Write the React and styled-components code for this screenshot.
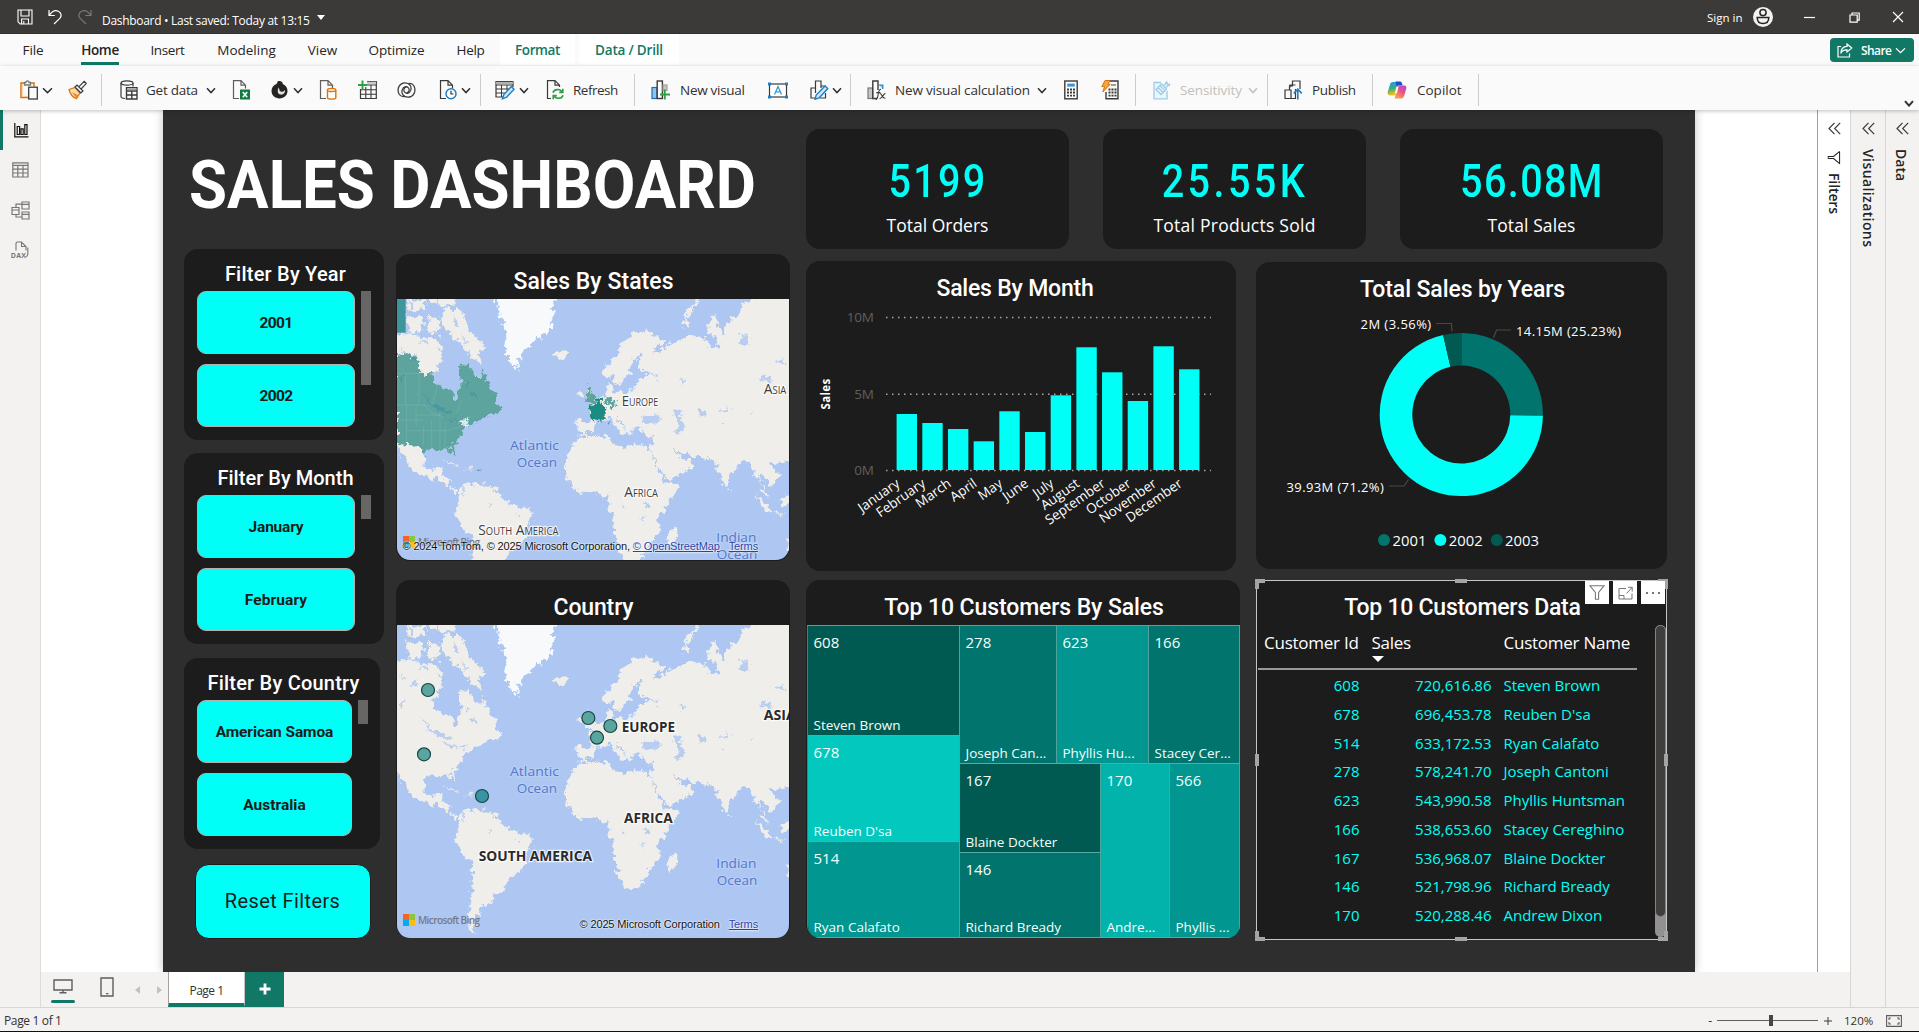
import React from "react";
import styled, { createGlobalStyle, css } from "styled-components";

const UI = '"Open Sans", "Noto Sans", sans-serif';
const DIN = 'Roboto, "Open Sans", sans-serif';
const ARIAL = '"Liberation Sans", Arial, sans-serif';

const C = {
  green: "#117865",
  aqua: "#00fff6",
  page: "#2e2e2e",
  card: "#1c1c1c",
  grey: "#f3f2f1",
  line: "#d8d6d4",
  ink: "#323130",
};

const Global = createGlobalStyle`
  *, *::before, *::after { box-sizing: border-box; }
  body { margin: 0; background: #f3f2f1; font-family: ${UI}; overflow: hidden; }
  svg { display: block; }
`;

const Shell = styled.div`
  width: 1919px;
  height: 1032px;
  display: flex;
  flex-direction: column;
  background: ${C.grey};
  color: ${C.ink};
`;

const Slot = styled.div`
  flex: none;
  display: flex;
  align-items: center;
  margin-left: ${(p) => p.$ml || 0}px;
  width: ${(p) => (p.$w ? `${p.$w}px` : "auto")};
`;

const Label = styled.span`
  flex: none;
  white-space: nowrap;
  margin-left: ${(p) => p.$ml || 0}px;
  width: ${(p) => (p.$w ? `${p.$w}px` : "auto")};
  font-size: ${(p) => p.$size || 13.5}px;
  font-weight: ${(p) => p.$weight || 400};
  letter-spacing: ${(p) => p.$ls || 0}px;
  color: ${(p) => p.$color || C.ink};
`;

/* ---------- title bar ---------- */
const TitleBar = styled.header`
  flex: none;
  height: 34px;
  display: flex;
  align-items: center;
  background: #3b3a38;
  border-bottom: 1px solid #323130;
  padding: 1px 15px 0 17px;
`;
const DocName = styled(Label)`
  padding-top: 6px;
`;
const Caret = styled.i`
  width: 0;
  height: 0;
  margin-left: 7px;
  margin-top: 1px;
  border: 4px solid transparent;
  border-top: 5px solid #fff;
  border-bottom: 0;
`;
const Grow = styled.div`
  flex: 1;
`;

/* ---------- tabs ---------- */
const TabRow = styled.nav`
  flex: none;
  height: 32px;
  display: flex;
  background: #fafafa;
  padding-left: 22px;
`;
const Tab = styled.div`
  flex: none;
  display: flex;
  align-items: center;
  justify-content: center;
  height: 31px;
  padding-top: 1px;
  width: ${(p) => p.$w}px;
  margin-left: ${(p) => p.$ml || 0}px;
  font-size: 13.5px;
  white-space: nowrap;
  letter-spacing: ${(p) => p.$ls || 0}px;
  color: ${(p) => (p.$ctx ? C.green : "#252423")};
  font-weight: ${(p) => (p.$on || p.$ctx ? 600 : 400)};
  background: ${(p) => (p.$ctx ? "#fff" : "transparent")};
  ${(p) => p.$on && css`box-shadow: inset 0 -3px 0 ${C.green};`}
`;
const Share = styled.button`
  width: 84px;
  height: 24px;
  margin: 4px 5px 0 auto;
  padding: 0 0 0 7px;
  display: flex;
  align-items: center;
  border: 0;
  border-radius: 4px;
  background: ${C.green};
  color: #fff;
  font: 600 12px ${UI};
`;
const ShareText = styled.span`
  width: 34px;
  margin-left: 8px;
  text-align: left;
  letter-spacing: -0.6px;
`;

/* ---------- ribbon ---------- */
const Ribbon = styled.div`
  flex: none;
  position: relative;
  z-index: 2;
  height: 44px;
  display: flex;
  align-items: flex-start;
  padding: 8px 5px 0 20px;
  background: #fafafa;
  box-shadow: 0 1px 4px rgba(0, 0, 0, 0.25);
`;
const Tools = styled.div`
  display: flex;
  align-items: center;
  height: 32px;
`;
const Divider = styled.i`
  flex: none;
  width: 1px;
  height: 32px;
  margin-left: ${(p) => p.$ml || 0}px;
  background: #cfcdcb;
`;
const Collapse = styled.div`
  margin-left: auto;
  padding-top: 26px;
`;

/* ---------- body ---------- */
const Body = styled.div`
  height: 897px;
  flex: none;
  display: flex;
`;
const Rail = styled.aside`
  width: 41px;
  border-right: 1px solid #dddbd9;
  display: flex;
  flex-direction: column;
`;
const RailItem = styled.div`
  height: 40px;
  display: flex;
  align-items: center;
  padding-left: ${(p) => (p.$on ? 11 : 11)}px;
  border-left: ${(p) => (p.$on ? `3px solid ${C.green}` : "0")};
`;
const Center = styled.main`
  width: 1776px;
  display: flex;
  flex-direction: column;
`;
const CanvasArea = styled.div`
  height: 862px;
  padding-left: 122px;
  background: #fff;
`;
const Page = styled.div`
  width: 1532px;
  height: 862px;
  display: flex;
  padding-left: 21px;
  background: ${C.page};
  box-shadow: 0 0 9px rgba(0, 0, 0, 0.25);
  overflow: hidden;
`;
const PageTabs = styled.div`
  height: 35px;
  display: flex;
  padding-left: 10px;
  position: relative;
  background: ${C.grey};
`;
const ViewToggle = styled.div`
  width: 24px;
  display: flex;
  flex-direction: column;
  align-items: center;
  padding-top: ${(p) => p.$pt || 7}px;
  margin-left: ${(p) => p.$ml || 0}px;
`;
const Underline = styled.i`
  width: 24px;
  height: 3px;
  margin-top: 6px;
  border-radius: 2px;
  background: ${C.green};
`;
const PageArrow = styled.i`
  width: 0;
  height: 0;
  margin-top: 14px;
  margin-left: ${(p) => p.$ml}px;
  border: 4.5px solid transparent;
  ${(p) => (p.$next ? "border-left: 5px solid #c3c1bf; border-right: 0;" : "border-right: 5px solid #c3c1bf; border-left: 0;")}
`;
const PageTab = styled.div`
  width: 77px;
  margin-left: 6px;
  display: flex;
  align-items: center;
  justify-content: center;
  padding-top: 5px;
  background: #fff;
  border-left: 1px solid #a5a3a1;
  border-right: 1px solid #c9c7c5;
  border-bottom: 4px solid ${C.green};
`;
const AddPage = styled.div`
  width: 39px;
  display: flex;
  align-items: center;
  justify-content: center;
  padding-bottom: 2px;
  background: ${C.green};
`;
const SidePane = styled.aside`
  width: ${(p) => p.$w}px;
  height: ${(p) => p.$h || 897}px;
  display: flex;
  flex-direction: column;
  align-items: center;
  padding-top: 12px;
  background: ${(p) => (p.$white ? "#fff" : C.grey)};
  border-left: 1px solid ${(p) => (p.$white ? "#a19f9d" : "#d8d6d4")};
`;
const PaneName = styled.span`
  writing-mode: vertical-rl;
  font-size: 14px;
  font-weight: 600;
  line-height: 18px;
  color: #252423;
  letter-spacing: ${(p) => p.$ls || 0}px;
  margin-top: ${(p) => p.$mt}px;
  margin-right: ${(p) => p.$mr || 0}px;
`;
const PaneGlyph = styled.div`
  margin-top: 16px;
  transform: rotate(90deg);
`;
const StatusBar = styled.footer`
  flex: none;
  height: 25px;
  display: flex;
  align-items: center;
  padding: 2px 17px 0 4px;
  border-top: 1px solid ${C.line};
  border-bottom: 1px solid #111;
`;
const ZoomTrack = styled.div`
  width: 101px;
  height: 1px;
  margin: 0 6px 0 5px;
  background: #605e5c;
  display: flex;
  align-items: center;
  justify-content: center;
`;
const ZoomThumb = styled.i`
  width: 4px;
  height: 11px;
  margin-left: 7px;
  background: #484644;
`;

/* ---------- dashboard ---------- */
const LeftBlock = styled.div`
  width: 622px;
`;
const Heading = styled.h1`
  margin: 0;
  height: 139px;
  padding: 37px 0 0 5px;
  font: 700 66px/78px ${DIN};
  color: #fff;
  white-space: nowrap;
  transform: scaleX(0.937);
  transform-origin: 5px 0;
`;
const Columns = styled.div`
  display: flex;
  align-items: flex-start;
`;
const FilterColumn = styled.div`
  width: 212px;
  display: flex;
  flex-direction: column;
  gap: 13px;
`;
const FilterCard = styled.section`
  width: ${(p) => p.$w}px;
  height: 191px;
  margin-top: ${(p) => p.$mt || 0}px;
  border-radius: 14px;
  background: ${C.card};
`;
const FilterTitle = styled.h2`
  margin: 0;
  height: 42px;
  padding: 9px 0 0 3px;
  text-align: center;
  font: 500 20px/33px ${DIN};
  letter-spacing: ${(p) => p.$ls || 0}px;
  color: #fff;
`;
const FilterBody = styled.div`
  display: flex;
  gap: 6px;
  padding-left: 13px;
`;
const Options = styled.div`
  width: ${(p) => p.$w}px;
  display: flex;
  flex-direction: column;
  gap: 10px;
`;
const Option = styled.button`
  height: 63px;
  padding: 0;
  border: 1px solid #b3b0ad;
  border-radius: 9px;
  background: ${C.aqua};
  color: #1c1c1c;
  font: 700 15.5px ${DIN};
  letter-spacing: ${(p) => p.$ls || 0}px;
`;
const FilterScroll = styled.i`
  width: 10px;
  height: ${(p) => p.$h}px;
  background: #686664;
`;
const Reset = styled.button`
  width: 176px;
  height: 75px;
  margin: 2px 0 0 10.5px;
  padding: 0 0 2px;
  border: 1px solid #1c1c1c;
  border-radius: 14px;
  background: ${C.aqua};
  color: #1c1c1c;
  font: 400 20px ${DIN};
  letter-spacing: 0.4px;
`;
const MapColumn = styled.div`
  padding-top: 5px;
  display: flex;
  flex-direction: column;
  gap: 19px;
`;
const Card = styled.section`
  position: relative;
  width: ${(p) => p.$w}px;
  height: ${(p) => p.$h}px;
  border-radius: 14px;
  background: ${C.card};
`;
const CardTitle = styled.h2`
  margin: 0;
  height: 45px;
  padding: 10px ${(p) => p.$pr || 0}px 0 ${(p) => p.$pl || 0}px;
  text-align: center;
  font: 500 23px/35px ${DIN};
  letter-spacing: ${(p) => p.$ls || 0}px;
  color: #fff;
`;
const MapFrame = styled.div`
  position: relative;
  width: 392px;
  height: ${(p) => p.$h}px;
  margin-left: 1px;
  border-radius: 0 0 13px 13px;
  overflow: hidden;
`;
const BingBrand = styled.div`
  position: absolute;
  left: 6px;
  bottom: 12px;
  display: flex;
  align-items: center;
  gap: 3px;
  font: 600 10px/12px ${UI};
  letter-spacing: -0.6px;
  color: #77798a;
`;
const Tiles = styled.div`
  display: grid;
  grid-template-columns: 6px 6px;
  grid-auto-rows: 6px;
`;
const Tile = styled.i`
  background: ${(p) => p.$c};
`;
const Credits = styled.div`
  position: absolute;
  right: 31px;
  bottom: 7px;
  display: flex;
  white-space: nowrap;
  font: 11px/13px ${ARIAL};
  letter-spacing: -0.13px;
  color: #111;
  text-shadow: 0 0 2px #fff, 0 0 2px #fff;
`;
const Link = styled.a`
  margin-left: ${(p) => p.$ml}px;
  color: #2a43a8;
  text-decoration: underline;
`;

const RightBlock = styled.div`
  width: 862px;
  padding-top: 19px;
`;
const KpiRow = styled.div`
  display: flex;
  gap: 34px;
`;
const Kpi = styled.section`
  width: 263px;
  height: 120px;
  padding-top: 29px;
  border-radius: 14px;
  background: ${C.card};
  text-align: center;
  white-space: nowrap;
`;
const KpiValue = styled.div`
  font: 500 46px/46px ${DIN};
  color: ${C.aqua};
  transform: scaleX(0.86);
  letter-spacing: ${(p) => p.$ls}px;
  text-indent: 1px;
`;
const KpiLabel = styled.div`
  margin-top: 9px;
  font-size: 17.5px;
  line-height: 24px;
  letter-spacing: ${(p) => p.$ls || 0}px;
  color: #fff;
`;
const ChartRow = styled.div`
  margin-top: 12px;
  display: flex;
  gap: 16px;
`;
const ChartColumn = styled.div`
  width: 434px;
  display: flex;
  flex-direction: column;
  gap: ${(p) => p.$gap}px;
  padding-top: ${(p) => p.$pt || 0}px;
`;

const Tree = styled.div`
  width: 433px;
  height: 313px;
  margin-left: 1px;
  display: flex;
  border-radius: 0 0 13px 13px;
  border-top: 1px solid #5f9f9a;
  border-left: 1px solid #2f8d86;
  overflow: hidden;
`;
const TreeCol = styled.div`
  flex: ${(p) => (p.$w ? `0 0 ${p.$w}px` : "1")};
  display: flex;
  flex-direction: column;
`;
const TreeRow = styled.div`
  flex: ${(p) => (p.$h ? `0 0 ${p.$h}px` : "1")};
  display: flex;
`;
const Cell = styled.div`
  flex: ${(p) => (p.$s ? `0 0 ${p.$s}px` : "1")};
  min-width: 0;
  display: flex;
  flex-direction: column;
  justify-content: space-between;
  padding: 6px 0 0 5.5px;
  overflow: hidden;
  background: ${(p) => p.$c};
  border-right: 1px solid #4fa39d;
  border-bottom: 1px solid #58aaa4;
  color: #f4fffe;
  white-space: nowrap;
`;
const CellId = styled.span`
  font-size: 15px;
  line-height: 20px;
`;
const CellName = styled.span`
  font-size: 13.5px;
  line-height: 20px;
`;

const Frame = styled.div`
  position: absolute;
  inset: 0;
  border: 1px solid #c8c6c4;
`;
const Handle = styled.i`
  position: absolute;
  left: ${(p) => p.$x}px;
  top: ${(p) => p.$y}px;
  width: ${(p) => p.$w}px;
  height: ${(p) => p.$h}px;
  ${(p) => (p.$corner ? `border: solid #a6a4a2; border-width: ${p.$corner};` : "background: #a6a4a2;")}
`;
const VisualActions = styled.div`
  position: absolute;
  right: 2px;
  top: 1px;
  display: flex;
  gap: 4px;
`;
const VisualAction = styled.div`
  width: 24px;
  height: 23px;
  display: flex;
  align-items: center;
  justify-content: center;
  background: #fff;
`;
const Table = styled.div`
  width: 379px;
  margin-left: 2px;
`;
const tableGrid = css`
  display: grid;
  grid-template-columns: 101.5px 132px 1fr;
  white-space: nowrap;
`;
const TableHead = styled.div`
  ${tableGrid}
  height: 45px;
  border-bottom: 2px solid #999;
  font-size: 17px;
  line-height: 35px;
  letter-spacing: -0.25px;
  color: #fff;
`;
const HeadCell = styled.span`
  padding-left: ${(p) => p.$pl || 0}px;
`;
const SortMark = styled.i`
  display: block;
  width: 0;
  height: 0;
  margin-top: -4px;
  border: 6px solid transparent;
  border-top-color: #fff;
  border-bottom: 0;
`;
const TableRow = styled.div`
  ${tableGrid}
  height: 28.75px;
  font-size: 15px;
  line-height: 31px;
  color: ${C.aqua};
`;
const Num = styled.span`
  text-align: right;
`;
const Name = styled.span`
  padding-left: 12px;
`;
const TableScroll = styled.div`
  position: absolute;
  right: 1px;
  top: 45px;
  width: 11px;
  height: 312px;
  border-radius: 6px;
  background: #929090;
`;
const TableThumb = styled.div`
  height: 292px;
  border: 1px solid #858380;
  border-radius: 6px;
  background: #3f3e3c;
`;

/* ---------- icons ---------- */
const Ico = ({ w = 20, h = 20, c = "#3b3a39", sw = 1.2, children }) => (
  <svg width={w} height={h} viewBox={`0 0 ${w} ${h}`} fill="none" stroke={c} strokeWidth={sw}>
    {children}
  </svg>
);
const Chevron = ({ c = "#323130", w = 10, sw = 1.5 }) => (
  <Ico w={w} h={7} c={c} sw={sw}><path d={`M1 1.2 L${w / 2} 5.6 L${w - 1} 1.2`} /></Ico>
);
const DoubleChevron = () => (
  <Ico w={13} h={13} c="#3b3a39" sw={1.2}><path d="M6.5 .8 L1 6.5 L6.5 12.2 M12.2 .8 L6.7 6.5 L12.2 12.2" /></Ico>
);
const Doc = () => <path d="M7 18.5 H1.5 V.7 H9 L13.5 5.2 V8.5 M9 .7 V5.2 H13.5" />;

const SaveIcon = () => (
  <Ico w={16} h={16} c="#fff" sw={1.1}><path d="M1 1 H15 V15 H3.2 L1 12.8 Z M4 1 V7 H12 V1 M4.6 15 V10 H11.5 V15 M6.8 12 V15" /></Ico>
);
const UndoIcon = ({ c = "#fff", flip }) => (
  <Ico w={14} h={16} c={c} sw={1.2}>
    <path transform={flip ? "translate(14 0) scale(-1 1)" : undefined} d="M1 1 V6.5 H6.8 M1.3 6.2 C4 2.4 7.4 .9 10.3 2.3 C13.6 3.9 13.8 7.3 11.8 9.3 L6 15" />
  </Ico>
);
const PasteIcon = () => (
  <Ico w={19} h={20} sw={1.3}>
    <path d="M8 17.5 H1 V3 H4.5 M10.5 3 H14 V6.5" stroke="#d9730d" strokeWidth={1.5} />
    <path d="M2.2 4 V16.5 M3 16.4 H8" stroke="#f7c58b" strokeWidth=".9" />
    <path d="M4.5 5 V2.5 H6 C6 .4 9 .4 9 2.5 H10.5 V5 Z" stroke="#797775" />
    <rect x="8.7" y="7.2" width="8.6" height="11.8" fill="#fafafa" />
  </Ico>
);
const BrushIcon = () => (
  <Ico w={19} h={20}>
    <path d="M1 9.5 L7 7.5 L12 13 L8.5 18.8 C5 17.5 2 13.5 1 9.5 Z" fill="#fbd9ae" stroke="#d9730d" />
    <path d="M4 12 L8.5 18.5 L10.5 15.5 Z" fill="#e88a25" stroke="none" />
    <path d="M7 7 L9 5 L15 11 L12.8 13 Z M11 6.6 L16.2 1.4 L18.3 3.4 L13.2 8.8" fill="#fafafa" />
  </Ico>
);
const GetDataIcon = () => (
  <Ico w={18} h={20}>
    <ellipse cx="7" cy="3" rx="6" ry="2.2" />
    <path d="M1 3 V16.5 C1 17.5 3 18.3 5 18.5 M13 3 V6.5" />
    <path d="M6.5 7.6 H17 V19 H6.5 Z M6.5 11 H17 M6.5 15 H17 M11.8 11 V19" fill="#fafafa" strokeWidth="1.4" />
    <path d="M7 9.3 H16.6" strokeWidth="1.8" stroke="#a19f9d" />
  </Ico>
);
const ExcelIcon = () => (
  <Ico w={18} h={20} c="#605e5c">
    <Doc />
    <rect x="8" y="9.5" width="10" height="10" fill="#107c41" stroke="none" />
    <path d="M10.8 12 L15.2 17.2 M15.2 12 L10.8 17.2" stroke="#fff" strokeWidth="1.6" />
  </Ico>
);
const LakeIcon = () => (
  <Ico w={17} h={20} c="none">
    <path d="M6.5 1.5 C9 .6 11.5 1.2 11.8 4 C14.8 5.2 16.5 7.8 16.5 11 C16.5 15.4 13 18.4 8.5 18.4 C4 18.4 .5 15.4 .5 11 C.5 7.4 2.8 5 5.4 4 C6.2 3.4 6.4 2.6 6.5 1.5 Z" fill="#252423" />
    <path d="M7.6 7.5 C8.6 9 8.2 11 9.8 11.6 C11.8 12.3 13.2 11.2 14 9.8 C14.4 13.2 12 15 9.4 14.6 C6.6 14 6 10.6 7.6 7.5 Z" fill="#e1dfdd" />
  </Ico>
);
const SqlIcon = () => (
  <Ico w={18} h={20} c="#605e5c">
    <Doc />
    <path d="M8.5 10 V17.8 C8.5 19.6 16.8 19.6 16.8 17.8 V10" fill="#fff" stroke="#d9730d" strokeWidth="1.4" />
    <ellipse cx="12.6" cy="10" rx="4.2" ry="1.6" fill="#fbe3c6" stroke="#d9730d" strokeWidth="1.3" />
  </Ico>
);
const EnterDataIcon = () => (
  <Ico w={19} h={20}>
    <path d="M9 1.5 H18.3 V18.5 H2.5 V9" />
    <path d="M9 2.8 H18" strokeWidth="2.2" stroke="#c8c6c4" />
    <path d="M8 5 H18 M2.5 9.8 H18 M2.5 14.2 H18 M7.8 7 V18.5 M13 5 V18.5" strokeWidth="1.1" />
    <path d="M4.5 .5 V9.5 M0 5 H9" stroke="#2f9e44" strokeWidth="1.9" />
  </Ico>
);
const DataverseIcon = () => (
  <Ico w={19} h={18} sw={1.25}>
    <path d="M2 13 C-.5 7.5 2.5 2 8 1.8 C12.5 1.7 15 5.5 13.7 9.4 C12.6 12.4 9.4 13 7.8 11.4 C6 9.6 7 6.2 9.6 6.2" />
    <path d="M17 5 C19.5 10.5 16.5 16 11 16.2 C6.5 16.3 4 12.5 5.3 8.6 C6.4 5.6 9.6 5 11.2 6.6 C13 8.4 12 11.8 9.4 11.8" />
    <path d="M2 13 C3.5 15.5 5.5 15.8 7.5 15.4 M17 5 C15.5 2.5 13.5 2.2 11.5 2.6" />
  </Ico>
);
const RecentIcon = () => (
  <Ico w={18} h={20}>
    <Doc />
    <circle cx="12" cy="13.8" r="5" stroke="#1f7fc4" strokeWidth="1.5" fill="#fff" />
    <path d="M12 10.8 V14 H14.4" stroke="#323130" />
  </Ico>
);
const TransformIcon = () => (
  <Ico w={20} h={20}>
    <path d="M8 17 H1 V1.5 H18 V7" />
    <path d="M1 3 H18" stroke="#b3b0ad" strokeWidth="2.2" />
    <path d="M1 5 H18 M1 9 H14 M1 13 H10 M6.5 5 V17 M12 5 V10.5" strokeWidth="1" />
    <path d="M7.5 18.8 L8.8 14.6 L16.3 6.6 L19 9.2 L11.6 17.2 Z" fill="#cfe6f8" stroke="#1f7fc4" strokeWidth="1.4" />
  </Ico>
);
const RefreshIcon = () => (
  <Ico w={19} h={20}>
    <path d="M5 18.5 H1.5 V.7 H9 L13.5 5.2 V7 M9 .7 V5.2 H13.5" />
    <path d="M7 12.8 C8 8.8 14.5 8.5 16 12 M16.8 8.8 V12.4 H13.2 M17 15.2 C16 19 9.5 19.5 8 15.8 M7.2 19.2 V15.6 H10.8" stroke="#2f9e44" strokeWidth="1.6" />
  </Ico>
);
const NewVisualIcon = () => (
  <Ico w={20} h={20}>
    <rect x="1" y="7.5" width="5" height="11" fill="#8ec5f0" stroke="#1f6fb5" />
    <rect x="6.2" y="1" width="5.2" height="17.5" fill="#fff" strokeWidth="1.4" />
    <rect x="12" y="5" width="4" height="5.5" fill="#c8c6c4" stroke="#a19f9d" />
    <path d="M13.8 9.5 V19.5 M9 14.5 H19" stroke="#2f9e44" strokeWidth="1.8" />
  </Ico>
);
const TextBoxIcon = () => (
  <Ico w={20} h={17}>
    <rect x="1.5" y="2" width="17" height="13" fill="#fff" />
    <path d="M6.5 12.5 L10 4.5 L13.5 12.5 M7.7 9.8 H12.3" stroke="#3a96d8" strokeWidth="1.3" />
    <path d="M0 .5 h3 v3 h-3z M17 .5 h3 v3 h-3z M0 13.5 h3 v3 h-3z M17 13.5 h3 v3 h-3z" fill="#1f7fc4" stroke="none" />
  </Ico>
);
const ShapesIcon = () => (
  <Ico w={20} h={20}>
    <path d="M6 18 H1 V8 H5.5 M5.5 13 V1 H11 V8 M11 6 H15.5 M15.5 13 V18 H10" />
    <path d="M5 19.2 L6.2 15 L15 6 L17.8 8.6 L9.2 17.8 Z" fill="#cfe6f8" stroke="#1f7fc4" strokeWidth="1.4" />
  </Ico>
);
const CalcVisualIcon = () => (
  <Ico w={20} h={20}>
    <rect x="1" y="8" width="4.6" height="10.5" fill="#c8c6c4" stroke="#797775" />
    <path d="M10 18.5 H5.8 V1 H11 V10" fill="none" strokeWidth="1.4" />
    <path d="M12 5 H15.8 V9" fill="#8ec5f0" stroke="#1f7fc4" />
    <path d="M8.6 19.4 C10.6 19.4 10.6 17.5 11.2 14 C11.7 11 12 9.3 14 9.3 M9.3 12.6 H13.4 M12.8 13.6 C15 13 15 19 18.4 18.2 M18.4 13.4 C16.4 13.6 15 18.8 12.6 18.6" strokeWidth="1.1" />
  </Ico>
);
const CalculatorIcon = () => (
  <Ico w={14} h={20}>
    <rect x=".8" y="1" width="12.4" height="17.8" fill="#fff" strokeWidth="1.4" />
    <rect x="3.2" y="3.6" width="7.6" height="3" fill="#3a96d8" stroke="none" />
    <path d="M3 9.5 H11 M3 12.5 H11 M3 15.6 H11" strokeWidth="1.8" strokeDasharray="2 1" />
  </Ico>
);
const QuickMeasureIcon = () => (
  <Ico w={18} h={20}>
    <path d="M8 1 H17 V18.8 H5 V12" strokeWidth="1.4" />
    <path d="M10 5 H15" strokeWidth="2" stroke="#a19f9d" />
    <path d="M7.5 9.5 H15.5 M7.5 12.5 H15.5 M7.5 15.6 H15.5" strokeWidth="1.8" strokeDasharray="2 1" />
    <path d="M4 .5 H9 L7 4.3 H9.2 L1.8 12 L3.6 6.6 H.8 Z" fill="#f7a544" stroke="#d9730d" strokeWidth="1" />
  </Ico>
);
const SensitivityIcon = () => (
  <Ico w={18} h={20} c="#9fcbe6" sw={1.3}>
    <path d="M8 2.5 H1 V18.8 H14 V11" fill="#eaf5fc" />
    <path d="M3 9.5 L8 14.5 M5 7.5 L10 12.5 M7 5.8 L12 10.6 M3 9.5 L8.5 4 L13.5 9 L8 14.5 Z M11 5.5 L14.5 1.5 M13 7.5 L17 3.5 M12.5 2 C14 4 15 5 16.8 6" />
  </Ico>
);
const PublishIcon = () => (
  <Ico w={19} h={20}>
    <path d="M6 7.5 V5 H11.5 M8.5 5 V1 H16 V9 M5.5 10 V6 H9 M1 10 H7 V18.5 H1 Z M7 18.5 H11.5 V9" />
    <path d="M13.8 19.5 V9.6 M9.8 13.4 L13.8 9.2 L17.8 13.4" stroke="#1f7fc4" strokeWidth="1.6" />
  </Ico>
);
const CopilotIcon = () => (
  <svg width="20" height="18" viewBox="0 0 20 18">
    <defs>
      <linearGradient id="cpA" x1="0" y1="0" x2=".2" y2="1"><stop offset="0" stopColor="#1d9bf0" /><stop offset=".55" stopColor="#3fae7a" /><stop offset="1" stopColor="#f3c317" /></linearGradient>
      <linearGradient id="cpB" x1="1" y1="0" x2=".4" y2="1"><stop offset="0" stopColor="#a04de0" /><stop offset=".5" stopColor="#e8508e" /><stop offset="1" stopColor="#f99a4e" /></linearGradient>
    </defs>
    <path d="M6 1 H12 L9 13 C8.6 14 8 14.4 7 14.4 H3 C.8 14.4 .2 12.8 .8 10.8 L3 3.4 C3.5 1.8 4.4 1 6 1 Z" fill="url(#cpA)" />
    <path d="M8.5 .6 H12.6 C14 .6 14.6 1.2 15 2.6 L15.6 4.6 H11.6 C10.5 4.6 10.2 5 9.8 6 Z" fill="#1b4fd0" />
    <path d="M14 17.4 H7.6 L10.8 5.8 C11.2 4.8 11.8 4.4 12.8 4.4 H17 C19.2 4.4 19.8 6 19.2 8 L17.2 14.8 C16.6 16.6 15.8 17.4 14 17.4 Z" fill="url(#cpB)" />
    <path d="M9.4 5.6 H11.6 L9.9 12.6 H7.8 Z" fill="#fff" opacity=".9" />
  </svg>
);
const AvatarIcon = () => (
  <svg width="20" height="20" viewBox="0 0 20 20">
    <circle cx="10" cy="10" r="10" fill="#f3f2f1" />
    <circle cx="10" cy="5.6" r="3.1" fill="none" stroke="#252423" strokeWidth="1.5" />
    <path d="M4.2 10.6 H15.8 C15.8 14.4 13.4 16.6 10 16.6 C6.6 16.6 4.2 14.4 4.2 10.6 Z" fill="none" stroke="#252423" strokeWidth="1.5" />
  </svg>
);
const ShareIcon = () => (
  <Ico w={16} h={15} c="#fff"><path d="M4 3.5 H1 V14 H12.5 V10.5 M10 1 L14.8 5 L10 9 V6.8 C6.6 6.6 4.8 8 3.8 10.4 C4 6.2 6 3.6 10 3.4 Z" /></Ico>
);
const FunnelIcon = ({ w = 16, h = 15, c = "#797775", sw = 1.1, thin }) => (
  <svg width={w} height={h} viewBox="0 0 16 15" fill="none" stroke={c} strokeWidth={sw}>
    <path d={thin ? "M1 1 H15 L9.2 8 V14.4 M1 1 L6.8 8 V14.4 H9.2" : "M.8 .7 H15.2 L9.6 7.4 V14.2 H6.4 V7.4 Z"} />
  </svg>
);

/* ---------- maps ---------- */
const LAND = [
  "M312 160 L325 200 330 230 345 265 350 290 342 320 355 350 360 378 385 384 390 345 410 325 430 310 460 285 485 265 478 250 495 225 490 200 508 160Z",
  "M497 345 L505 334 525 330 535 340 528 355 510 362Z",
  "M0 315 L60 312 130 318 162 345 150 365 140 395 125 400 135 430 185 450 192 480 202 478 215 430 206 390 210 374 236 372 260 415 276 398 300 440 325 465 318 487 340 503 330 515 290 528 250 550 230 556 222 580 200 605 184 620 198 652 188 645 176 624 150 628 112 632 105 650 103 680 128 692 138 680 158 682 154 706 178 716 180 738 200 748 214 752 202 762 180 744 150 720 120 712 96 704 66 690 52 664 32 640 21 618 0 600Z",
  "M160 205 L212 208 236 262 262 300 288 322 266 334 272 372 240 352 214 312 188 292 160 262Z",
  "M48 226 L100 232 96 276 56 280Z M118 226 L152 240 146 286 112 272Z M40 186 L104 178 110 206 60 212Z M112 160 L196 160 192 196 130 196Z M0 280 L70 284 150 300 160 330 90 320 0 318Z",
  "M215 735 L240 728 290 735 330 755 350 785 385 800 425 810 425 835 405 865 400 910 360 935 345 965 312 988 300 1010 275 1020 265 1045 250 1075 256 1104 240 1096 234 1050 245 990 250 930 245 882 215 860 195 815 205 790 215 760Z",
  "M575 588 L620 588 655 583 660 605 700 625 720 612 770 618 785 645 802 685 825 727 865 732 855 765 820 815 805 840 810 880 790 900 770 935 745 966 705 972 690 935 670 880 675 850 660 800 655 770 640 765 600 755 575 760 545 740 525 705 525 660 545 620 560 600Z",
  "M860 860 L858 895 844 918 830 906 838 872Z",
  "M562 540 L605 545 600 512 585 502 610 492 625 480 645 468 655 455 655 432 667 434 672 456 700 455 740 442 742 420 765 406 800 404 768 398 748 388 742 370 756 350 748 342 730 365 722 385 726 400 706 412 690 432 678 430 668 408 648 412 638 388 656 368 680 350 690 320 712 298 735 274 770 268 792 285 820 302 812 322 790 318 794 340 816 330 845 308 870 300 905 288 935 290 952 300 962 325 986 322 980 300 955 272 955 238 968 224 984 245 990 280 1012 292 1004 260 1030 232 1052 214 1056 190 1090 176 1220 165 1220 665 1140 672 1165 700 1160 728 1146 738 1125 715 1112 698 1108 722 1126 755 1140 775 1120 760 1104 712 1085 682 1066 656 1045 675 1020 710 1008 742 994 724 978 668 955 655 905 648 870 640 850 620 862 645 886 656 908 664 898 688 868 706 832 718 812 692 798 664 778 626 788 592 765 584 748 570 735 562 720 590 702 562 682 534 672 530 690 555 712 575 700 588 680 563 658 534 640 542 620 550 605 575 585 585 562 580Z",
  "M598 440 L608 458 622 482 610 488 584 490 594 470 588 450Z M566 458 L580 454 580 472 566 476Z M925 172 L905 196 885 225 880 258 896 264 892 236 912 205Z",
  "M160 660 L190 668 206 680 188 674Z M226 686 L250 686 242 692Z M1098 762 L1120 782 1146 815 1132 814 1110 790Z M1148 818 L1186 822 1170 826Z M1168 782 L1210 760 1210 800 1178 796Z M1012 742 L1022 746 1018 754Z M1190 900 L1210 890 1210 950 1194 930Z",
];
const WATER = [
  "M752 545 L765 520 785 526 800 518 818 540 800 550 765 552Z",
  "M848 516 L880 510 870 532 884 560 872 584 852 578 862 550Z",
  "M920 512 L944 508 950 524 930 530Z M984 506 L1030 502 1000 512Z M992 548 L1006 550 1004 560Z M1078 530 L1092 520 1090 528Z",
  "M1048 282 L1074 284 1080 310 1056 318Z M1110 412 L1140 408 1146 424 1118 424Z M1160 356 L1182 362 1172 378Z M868 420 L892 416 872 434Z M790 410 L806 404 802 418Z",
  "M288 790 L308 792 300 802Z M764 788 L776 784 778 800 766 802Z M700 792 L704 806 698 804Z M756 830 L764 826 760 850Z M380 826 L392 826 388 832Z",
  "M96 452 L112 470 124 500 110 486Z M120 490 L150 500 190 516 164 520 140 510Z M160 530 L186 536 206 544 180 548Z M208 540 L232 536 220 548Z M60 352 L80 346 74 362Z M28 420 L44 400 40 424Z",
  "M64 180 L70 200 58 206Z M190 225 L204 250 196 256Z M212 280 L232 310 222 306Z M90 300 L110 306 104 314Z M30 330 L52 336 44 346Z M146 176 L150 196 142 190Z M224 420 L236 440 226 436Z M244 460 L262 456 256 470Z",
];
const NA_FILL = "M21 338 L87 355 87 398 125 400 135 430 185 450 192 480 202 478 215 430 206 390 210 374 236 372 262 416 276 396 300 440 325 465 320 487 340 505 330 515 290 530 248 553 232 553 236 530 204 546 228 555 222 580 200 605 184 620 198 652 186 645 176 624 150 628 112 632 108 648 88 625 62 616 21 612Z";
const EU_FILL = "M598 440 L608 458 620 482 584 490 596 470 590 450Z M640 474 L655 470 660 484 684 480 676 494 678 506 664 508 660 492 645 488Z M264 688 H274 V692 H264Z M652 542 h5 v8 h-5z";
const FR_FILL = "M585 502 L604 494 622 480 646 494 642 512 646 532 630 546 600 542 604 514Z";

function BaseMap({ id, height, overlay, children }) {
  return (
    <svg width="392" height={height} viewBox={`21 177 1176 ${height * 3}`}>
      <defs>
        <filter id={`coast-${id}`} filterUnits="userSpaceOnUse" x="0" y="150" width="1230" height="990">
          <feTurbulence type="fractalNoise" baseFrequency="0.06" numOctaves="4" seed="4" />
          <feDisplacementMap in="SourceGraphic" scale="34" xChannelSelector="R" yChannelSelector="G" />
        </filter>
      </defs>
      <rect x="0" y="150" width="1230" height="990" fill="#adc7f2" />
      <g filter={`url(#coast-${id})`}>
        {LAND.map((d, i) => <path key={d} d={d} fill={i === 0 ? "#f8f9fa" : "#efeeea"} />)}
        {WATER.map((d) => <path key={d} d={d} fill="#b9cdf0" />)}
        {overlay}
      </g>
      {children}
    </svg>
  );
}
const Halo = styled.text`
  font-family: ${UI};
  font-size: ${(p) => p.$s || 40}px;
  font-weight: ${(p) => p.$w || 400};
  font-variant: ${(p) => (p.$caps ? "small-caps" : "normal")};
  fill: ${(p) => (p.$ocean ? "#5577c9" : p.$w ? "#2b2b2b" : "#3e3d3c")};
  stroke: ${(p) => (p.$ocean ? "#bcd1f6" : "#ffffff")};
  stroke-width: 7px;
  stroke-opacity: 0.75;
  paint-order: stroke;
`;
const T = ({ x, y, len, children, ...p }) => (
  <Halo x={x} y={y} textLength={len} lengthAdjust="spacingAndGlyphs" {...p}>{children}</Halo>
);
const Oceans = () => (
  <>
    <T $ocean x={360} y={630} len={147}>Atlantic</T>
    <T $ocean x={380} y={681} len={121}>Ocean</T>
    <T $ocean x={979} y={907} len={120}>Indian</T>
    <T $ocean x={980} y={957} len={122}>Ocean</T>
  </>
);
const BUBBLES = [[114, 372, 0], [102, 565, 0], [276, 690, 1], [595, 456, 0], [661, 480, 0], [621, 515, 0]];

const Brand = () => (
  <BingBrand>
    <Tiles><Tile $c="#f1652b" /><Tile $c="#8cc63e" /><Tile $c="#00adef" /><Tile $c="#fdbd10" /></Tiles>
    Microsoft Bing
  </BingBrand>
);

/* ---------- charts ---------- */
const MONTHS = [
  ["January", 414], ["February", 423], ["March", 429], ["April", 441.3], ["May", 411.3], ["June", 432],
  ["July", 395.3], ["August", 347.3], ["September", 372.3], ["October", 401], ["November", 346.3], ["December", 369.3],
];
const ChartText = styled.text`
  font-family: ${UI};
  font-size: ${(p) => p.$s || 13.5}px;
  font-weight: ${(p) => p.$w || 400};
  fill: ${(p) => p.$c || "#fff"};
  letter-spacing: ${(p) => p.$ls || 0}px;
`;
function MonthChart() {
  return (
    <svg width="430" height="265" viewBox="806 306 430 265">
      {[[317.6, "10M"], [394.3, "5M"], [470.5, "0M"]].map(([y, t]) => (
        <g key={t}>
          <line x1="886" x2="1211" y1={y} y2={y} stroke="#a8a6a4" strokeWidth="1.5" strokeDasharray="1.5 4.5" />
          <ChartText x="873.5" y={y + 4.5} textAnchor="end" $c="#605e5c" $ls={-0.3}>{t}</ChartText>
        </g>
      ))}
      {MONTHS.map(([m, y], i) => (
        <g key={m}>
          <rect x={896.6 + i * 25.68} y={y} width="20.4" height={470 - y} fill={C.aqua} />
          <ChartText textAnchor="end" transform={`translate(${900.8 + i * 25.68} 485.5) rotate(-35)`}>{m}</ChartText>
        </g>
      ))}
      <ChartText $w={700} $s={11.5} $ls={0.3} textAnchor="middle" transform="translate(830 394) rotate(-90)">Sales</ChartText>
    </svg>
  );
}
const YEARS = [["2001", 0, 0.2523, "#01756d"], ["2002", 0.2523, 0.9643, C.aqua], ["2003", 0.9643, 1, "#015a52"]];
function Donut() {
  const cx = 1461.3, cy = 414.5, R = 81.6, r = 49;
  const pt = (a, q) => `${cx + q * Math.sin(a * 2 * Math.PI)} ${cy - q * Math.cos(a * 2 * Math.PI)}`;
  return (
    <svg width="411" height="262" viewBox="1256 307 411 262">
      {YEARS.map(([y, a, b, c]) => {
        const big = b - a > 0.5 ? 1 : 0;
        return <path key={y} fill={c} d={`M${pt(a, R)} A${R} ${R} 0 ${big} 1 ${pt(b, R)} L${pt(b, r)} A${r} ${r} 0 ${big} 0 ${pt(a, r)}Z`} />;
      })}
      <path d="M1436 323.5 H1451.4 L1452 331.5 M1493.5 338 L1496.5 330 H1511 M1389 486 H1404 L1408.5 479.5" fill="none" stroke="#4a4846" strokeWidth="1.2" />
      <ChartText x="1360.5" y="328.7" $s={13} $ls={0.45}>2M (3.56%)</ChartText>
      <ChartText x="1516" y="335.7" $s={13} $ls={0.38}>14.15M (25.23%)</ChartText>
      <ChartText x="1286.5" y="491.7" $s={13} $ls={0.38}>39.93M (71.2%)</ChartText>
      {YEARS.map(([y, , , c], i) => (
        <g key={y}>
          <circle cx={1384 + i * 56.4} cy="540" r="6" fill={c} />
          <ChartText x={1392.5 + i * 56.3} y="545.5" $s={14.8}>{y}</ChartText>
        </g>
      ))}
    </svg>
  );
}

const FILTERS = [
  { title: "Filter By Year", ls: 0.22, w: 200, bw: 158, sh: 94, items: [["2001", -0.7], ["2002", -0.7]] },
  { title: "Filter By Month", ls: 0.02, w: 200, bw: 158, sh: 24, items: [["January", -0.2], ["February", 0.1]] },
  { title: "Filter By Country", ls: 0.22, w: 196, mt: 1, bw: 155, sh: 24, items: [["American Samoa", -0.1], ["Australia", 0]] },
];
const CUSTOMERS = [
  ["608", "720,616.86", "Steven Brown"], ["678", "696,453.78", "Reuben D'sa"], ["514", "633,172.53", "Ryan Calafato"],
  ["278", "578,241.70", "Joseph Cantoni"], ["623", "543,990.58", "Phyllis Huntsman"], ["166", "538,653.60", "Stacey Cereghino"],
  ["167", "536,968.07", "Blaine Dockter"], ["146", "521,798.96", "Richard Bready"], ["170", "520,288.46", "Andrew Dixon"],
];
const TreeCell = ({ id, name, c, s }) => (
  <Cell $c={c} $s={s}><CellId>{id}</CellId><CellName>{name}</CellName></Cell>
);

export default function App() {
  return (
    <Shell>
      <Global />
      <TitleBar>
        <SaveIcon />
        <Slot $ml={15}><UndoIcon /></Slot>
        <Slot $ml={16}><UndoIcon c="#797775" flip /></Slot>
        <DocName $ml={10} $w={208} $size={12} $ls={-0.3} $color="#fff">Dashboard • Last saved: Today at 13:15</DocName>
        <Caret />
        <Grow />
        <Label $size={11.5} $w={36} $color="#fff">Sign in</Label>
        <Slot $ml={10} $w={51}><AvatarIcon /></Slot>
        <Slot $w={45}><Ico w={11} h={11} c="#fff"><path d="M0 5.5 H11" /></Ico></Slot>
        <Slot $w={43}><Ico w={11} h={11} c="#fff"><path d="M1 3 H8.2 V10.2 H1 Z M3 3 V1 H10.2 V8.2 H8.2" /></Ico></Slot>
        <Ico w={12} h={12} c="#fff"><path d="M1 1 L11 11 M11 1 L1 11" /></Ico>
      </TitleBar>

      <TabRow>
        <Tab $w={22} $ls={-0.1}>File</Tab>
        <Tab $ml={37} $w={38} $on $ls={-0.35}>Home</Tab>
        <Tab $ml={31} $w={35} $ls={-0.4}>Insert</Tab>
        <Tab $ml={32} $w={59}>Modeling</Tab>
        <Tab $ml={31} $w={31}>View</Tab>
        <Tab $ml={30} $w={57} $ls={-0.1}>Optimize</Tab>
        <Tab $ml={31} $w={29} $ls={-0.3}>Help</Tab>
        <Tab $ml={15} $w={75} $ctx $ls={-0.4}>Format</Tab>
        <Tab $ml={4} $w={100} $ctx $ls={-0.2}>Data / Drill</Tab>
        <Share><ShareIcon /><ShareText>Share</ShareText><Chevron c="#fff" w={11} sw={1.2} /></Share>
      </TabRow>

      <Ribbon>
        <Tools>
          <Slot $w={22}><PasteIcon /></Slot><Slot $w={26}><Chevron w={11} /></Slot>
          <Slot $w={19}><BrushIcon /></Slot>
          <Divider $ml={14} />
          <Slot $ml={18} $w={26}><GetDataIcon /></Slot>
          <Label $w={60} $ls={-0.26}>Get data</Label>
          <Slot $w={26}><Chevron /></Slot>
          <Slot $w={39}><ExcelIcon /></Slot>
          <Slot $w={22}><LakeIcon /></Slot><Slot $w={26}><Chevron /></Slot>
          <Slot $w={39}><SqlIcon /></Slot>
          <Slot $w={39}><EnterDataIcon /></Slot>
          <Slot $w={42}><DataverseIcon /></Slot>
          <Slot $w={22}><RecentIcon /></Slot><Slot $w={19}><Chevron /></Slot>
          <Divider />
          <Slot $ml={14} $w={24}><TransformIcon /></Slot><Slot $w={27}><Chevron /></Slot>
          <Slot $w={27}><RefreshIcon /></Slot>
          <Label $w={61} $ls={-0.5}>Refresh</Label>
          <Divider />
          <Slot $ml={16} $w={29}><NewVisualIcon /></Slot>
          <Label $w={88} $ls={-0.28}>New visual</Label>
          <Slot $w={42}><TextBoxIcon /></Slot>
          <Slot $w={22}><ShapesIcon /></Slot><Slot $w={18}><Chevron /></Slot>
          <Divider />
          <Slot $ml={16} $w={28}><CalcVisualIcon /></Slot>
          <Label $w={142} $ls={-0.17}>New visual calculation</Label>
          <Slot $w={27}><Chevron /></Slot>
          <Slot $w={37}><CalculatorIcon /></Slot>
          <Slot $w={34}><QuickMeasureIcon /></Slot>
          <Divider />
          <Slot $ml={17} $w={27}><SensitivityIcon /></Slot>
          <Label $w={68} $ls={-0.11} $color="#c1bfbd">Sensitivity</Label>
          <Slot $w={19}><Chevron c="#c1bfbd" /></Slot>
          <Divider />
          <Slot $ml={16} $w={28}><PublishIcon /></Slot>
          <Label $w={60} $ls={-0.35}>Publish</Label>
          <Divider />
          <Slot $ml={14} $w={30}><CopilotIcon /></Slot>
          <Label $w={61}>Copilot</Label>
          <Divider />
        </Tools>
        <Collapse><Chevron sw={2} /></Collapse>
      </Ribbon>

      <Body>
        <Rail>
          <RailItem $on>
            <Ico w={15} h={15} c="#111" sw={1.2}><path d="M.8 0 V13.8 H14.5 M3.2 3.5 H5.6 V11.5 H3.2 Z M7 5.8 H9.2 V11.5 H7 Z M10.8 1.6 H13 V11.5 H10.8 Z" /></Ico>
          </RailItem>
          <RailItem>
            <Slot $ml={1}><Ico w={17} h={16} c="#797775" sw={1.2}><path d="M.8 .8 H16 V15 H.8 Z M.8 3.4 H16 M.8 7.2 H16 M.8 11 H16 M5.8 3.4 V15 M11 3.4 V15" /></Ico></Slot>
          </RailItem>
          <RailItem>
            <Ico w={19} h={19} c="#797775" sw={1.2}><path d="M1 6.5 H8 V13.5 H1 Z M1 9 H8 M11 1 H18 V8 H11 Z M11 3.3 H18 M11 11 H18 V18 H11 Z M11 13.3 H18 M5 6.5 V3.2 H11 M5 13.5 V16 H11" /></Ico>
          </RailItem>
          <RailItem>
            <svg width="19" height="18" viewBox="0 0 19 18" fill="none" stroke="#797775" strokeWidth="1.1">
              <path d="M5 9.5 V2.5 Q5 1 6.5 1 H10.5 L15 5.5 V9.5 M10.5 1 V5.5 H15 M16.8 6.5 V13 Q16.8 15.4 14.6 16" />
              <text x="-.2" y="16.6" fontSize="7" fontWeight="700" fontFamily="Open Sans" fill="#797775" stroke="none" textLength="15">DAX</text>
            </svg>
          </RailItem>
        </Rail>

        <Center>
          <CanvasArea>
            <Page>
              <LeftBlock>
                <Heading>SALES DASHBOARD</Heading>
                <Columns>
                  <FilterColumn>
                    {FILTERS.map((f) => (
                      <FilterCard key={f.title} $w={f.w} $mt={f.mt}>
                        <FilterTitle $ls={f.ls}>{f.title}</FilterTitle>
                        <FilterBody>
                          <Options $w={f.bw}>
                            {f.items.map(([t, ls]) => <Option key={t} $ls={ls}>{t}</Option>)}
                          </Options>
                          <FilterScroll $h={f.sh} />
                        </FilterBody>
                      </FilterCard>
                    ))}
                    <Reset>Reset Filters</Reset>
                  </FilterColumn>
                  <MapColumn>
                    <Card $w={394} $h={307}>
                      <CardTitle $ls={0.05} $pl={1}>Sales By States</CardTitle>
                      <MapFrame $h={261}>
                        <BaseMap
                          id="states"
                          height={261}
                          overlay={
                            <>
                              <path d={NA_FILL} fill="#117e76" opacity=".66" />
                              <path d={EU_FILL} fill="#117e76" opacity=".66" />
                              <path d={FR_FILL} fill="#0d857b" opacity=".94" />
                            </>
                          }
                        >
                          <rect x="21" y="177" width="26" height="101" fill="#11847a" opacity=".72" />
                          <path d="M21 400 H87 M47 400 V495 M21 495 H125 M87 398 V495 M125 495 L145 430 M50 495 V600 M21 540 H100 M78 495 V560 M78 525 H150 M100 560 V620 M50 572 H180 M125 540 V625 M150 520 V628 M165 560 V625 M100 495 L130 520 200 545 M180 570 L215 560 M200 520 L215 480" fill="none" stroke="#8fc2bd" strokeWidth="1.5" opacity=".6" />
                          <T $caps $s={44} x={695} y={498} len={110}>Europe</T>
                          <T $caps $s={44} x={703} y={771} len={101}>Africa</T>
                          <T $caps $s={44} x={1121} y={462} len={68}>Asia</T>
                          <T $caps $s={44} x={265} y={886} len={240}>South America</T>
                          <Oceans />
                        </BaseMap>
                        <Brand />
                        <Credits>
                          © 2024 TomTom, © 2025 Microsoft Corporation,
                          <Link $ml={3}>© OpenStreetMap</Link>
                          <Link $ml={9}>Terms</Link>
                        </Credits>
                      </MapFrame>
                    </Card>
                    <Card $w={394} $h={358}>
                      <CardTitle $ls={-0.15} $pl={1}>Country</CardTitle>
                      <MapFrame $h={313}>
                        <BaseMap id="country" height={313}>
                          <T $w={700} x={695} y={497} len={160}>EUROPE</T>
                          <T $w={700} x={702} y={771} len={146}>AFRICA</T>
                          <T $w={700} x={1121} y={461} len={96}>ASIA</T>
                          <T $w={700} x={266} y={886} len={340}>SOUTH AMERICA</T>
                          <Oceans />
                          {BUBBLES.map(([x, y, sea]) => (
                            <circle key={`${x}-${y}`} cx={x} cy={y} r="19.5" fill={sea ? "#3a93a0" : "#5aa5a0"} stroke="#174744" strokeWidth="3.6" />
                          ))}
                        </BaseMap>
                        <Brand />
                        <Credits>
                          © 2025 Microsoft Corporation
                          <Link $ml={9}>Terms</Link>
                        </Credits>
                      </MapFrame>
                    </Card>
                  </MapColumn>
                </Columns>
              </LeftBlock>

              <RightBlock>
                <KpiRow>
                  <Kpi><KpiValue $ls={2.6}>5199</KpiValue><KpiLabel>Total Orders</KpiLabel></Kpi>
                  <Kpi><KpiValue $ls={4}>25.55K</KpiValue><KpiLabel $ls={0.25}>Total Products Sold</KpiLabel></Kpi>
                  <Kpi><KpiValue $ls={1.6}>56.08M</KpiValue><KpiLabel $ls={0.1}>Total Sales</KpiLabel></Kpi>
                </KpiRow>
                <ChartRow>
                  <ChartColumn $gap={9}>
                    <Card $w={430} $h={310}>
                      <CardTitle $ls={-0.2} $pr={12}>Sales By Month</CardTitle>
                      <MonthChart />
                    </Card>
                    <Card $w={434} $h={358}>
                      <CardTitle $ls={-0.1} $pl={2}>Top 10 Customers By Sales</CardTitle>
                      <Tree>
                        <TreeCol $w={152}>
                          <TreeCell id="608" name="Steven Brown" c="#015a52" s={110} />
                          <TreeCell id="678" name="Reuben D'sa" c="#02c8be" s={106} />
                          <TreeCell id="514" name="Ryan Calafato" c="#01968f" />
                        </TreeCol>
                        <TreeCol>
                          <TreeRow $h={138}>
                            <TreeCell id="278" name="Joseph Can..." c="#01756d" s={97} />
                            <TreeCell id="623" name="Phyllis Hu..." c="#01968f" s={92} />
                            <TreeCell id="166" name="Stacey Cer..." c="#01756d" />
                          </TreeRow>
                          <TreeRow>
                            <TreeCol $w={141}>
                              <TreeCell id="167" name="Blaine Dockter" c="#015a52" s={89} />
                              <TreeCell id="146" name="Richard Bready" c="#01756d" />
                            </TreeCol>
                            <TreeCell id="170" name="Andre..." c="#01b3ab" s={69} />
                            <TreeCell id="566" name="Phyllis ..." c="#01968f" />
                          </TreeRow>
                        </TreeCol>
                      </Tree>
                    </Card>
                  </ChartColumn>
                  <ChartColumn $gap={11} $pt={1}>
                    <Card $w={411} $h={307}>
                      <CardTitle $ls={-0.1} $pl={2}>Total Sales by Years</CardTitle>
                      <Donut />
                    </Card>
                    <Card $w={411} $h={360}>
                      <CardTitle $ls={-0.25} $pl={2}>Top 10 Customers Data</CardTitle>
                      <Table>
                        <TableHead>
                          <HeadCell $pl={6}>Customer Id</HeadCell>
                          <HeadCell $pl={12}>Sales<SortMark /></HeadCell>
                          <HeadCell $pl={12}>Customer Name</HeadCell>
                        </TableHead>
                        {CUSTOMERS.map(([id, s, n]) => (
                          <TableRow key={id}><Num>{id}</Num><Num>{s}</Num><Name>{n}</Name></TableRow>
                        ))}
                      </Table>
                      <TableScroll><TableThumb /></TableScroll>
                      <Frame />
                      <Handle $x={-1} $y={-1} $w={10} $h={10} $corner="4px 0 0 4px" />
                      <Handle $x={402} $y={-1} $w={10} $h={10} $corner="4px 4px 0 0" />
                      <Handle $x={-1} $y={351} $w={10} $h={10} $corner="0 0 4px 4px" />
                      <Handle $x={402} $y={351} $w={10} $h={10} $corner="0 4px 4px 0" />
                      <Handle $x={199} $y={-1} $w={12} $h={4} />
                      <Handle $x={199} $y={357} $w={12} $h={4} />
                      <Handle $x={-1} $y={174} $w={4} $h={12} />
                      <Handle $x={408} $y={174} $w={4} $h={12} />
                      <VisualActions>
                        <VisualAction><FunnelIcon /></VisualAction>
                        <VisualAction><Ico w={15} h={14} c="#797775" sw={1}><path d="M8 2.5 H1 V13 H14 V7.5 M1 9.5 H6 V13 M8.5 7.5 L14 1.5 M10 1.3 H14.2 V5.6" /></Ico></VisualAction>
                        <VisualAction><Ico w={16} h={4} c="none"><path d="M1 1h2v2h-2z M7 1h2v2h-2z M13 1h2v2h-2z" fill="#797775" /></Ico></VisualAction>
                      </VisualActions>
                    </Card>
                  </ChartColumn>
                </ChartRow>
              </RightBlock>
            </Page>
          </CanvasArea>
          <PageTabs>
            <ViewToggle>
              <Ico w={20} h={15} c="#605e5c" sw={1.4}><path d="M1 1 H19 V11 H1 Z M10 11 V13.6 M6.5 13.8 H13.5" /></Ico>
              <Underline />
            </ViewToggle>
            <ViewToggle $ml={20} $pt={5}>
              <Ico w={14} h={20} c="#605e5c" sw={1.4}><path d="M1 1 H13 V19 H1 Z M6 16.6 H8.4" /></Ico>
            </ViewToggle>
            <PageArrow $ml={16} />
            <PageArrow $ml={17} $next />
            <PageTab><Label $size={12} $ls={-0.5}>Page 1</Label></PageTab>
            <AddPage><Ico w={12} h={12} c="#fff" sw={2.8}><path d="M6 .5 V11.5 M.5 6 H11.5" /></Ico></AddPage>
          </PageTabs>
        </Center>

        <SidePane $w={33} $h={862} $white>
          <DoubleChevron />
          <PaneGlyph><FunnelIcon w={14} h={13} c="#252423" sw={1.3} thin /></PaneGlyph>
          <PaneName $mt={9} $ls={-0.1}>Filters</PaneName>
        </SidePane>
        <SidePane $w={35}><DoubleChevron /><PaneName $mt={14} $mr={1} $ls={0.4}>Visualizations</PaneName></SidePane>
        <SidePane $w={34}><DoubleChevron /><PaneName $mt={14} $mr={3}>Data</PaneName></SidePane>
      </Body>

      <StatusBar>
        <Label $size={12} $ls={-0.35}>Page 1 of 1</Label>
        <Grow />
        <Label $size={12}>-</Label>
        <ZoomTrack><ZoomThumb /></ZoomTrack>
        <Slot $w={20}><Ico w={8} h={8} sw={1}><path d="M4 0 V8 M0 4 H8" /></Ico></Slot>
        <Label $size={11.5} $w={42}>120%</Label>
        <Ico w={16} h={12} c="#605e5c" sw={1.1}><path d="M.6 .6 H15.4 V11.4 H.6 Z M5 3 H3 V5 M11 3 H13 V5 M5 9 H3 V7 M11 9 H13 V7" /></Ico>
      </StatusBar>
    </Shell>
  );
}
